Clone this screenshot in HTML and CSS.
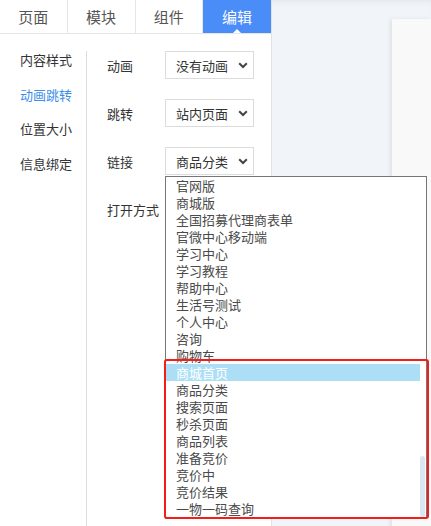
FILE: index.html
```html
<!DOCTYPE html>
<html lang="zh">
<head>
<meta charset="utf-8">
<link rel="stylesheet" href="styles.css">
</head>
<body>
<div class="app">
  <div class="editor">
    <div class="tabs">
      <div class="tab">页面</div>
      <div class="tab">模块</div>
      <div class="tab">组件</div>
      <div class="tab active">编辑</div>
    </div>
    <div class="body">
      <ul class="nav">
        <li>内容样式</li>
        <li class="on">动画跳转</li>
        <li>位置大小</li>
        <li>信息绑定</li>
      </ul>
      <div class="form">
        <div class="row">
          <span class="label">动画</span>
          <div class="select"><span>没有动画</span><svg class="chev" width="10" height="7" viewBox="0 0 10 7"><polyline points="1.2,1.2 5,5 8.8,1.2" fill="none" stroke="#444" stroke-width="2"/></svg></div>
        </div>
        <div class="row">
          <span class="label">跳转</span>
          <div class="select"><span>站内页面</span><svg class="chev" width="10" height="7" viewBox="0 0 10 7"><polyline points="1.2,1.2 5,5 8.8,1.2" fill="none" stroke="#444" stroke-width="2"/></svg></div>
        </div>
        <div class="row">
          <span class="label">链接</span>
          <div class="select"><span>商品分类</span><svg class="chev" width="10" height="7" viewBox="0 0 10 7"><polyline points="1.2,1.2 5,5 8.8,1.2" fill="none" stroke="#444" stroke-width="2"/></svg></div>
        </div>
        <div class="row">
          <span class="label">打开方式</span>
          <div class="select"></div>
        </div>
      </div>
    </div>
  </div>
  <div class="stage">
    <div class="card"></div>
  </div>
</div>

<div class="dropdown">
  <ul class="options">
    <li>官网版</li>
    <li>商城版</li>
    <li>全国招募代理商表单</li>
    <li>官微中心移动端</li>
    <li>学习中心</li>
    <li>学习教程</li>
    <li>帮助中心</li>
    <li>生活号测试</li>
    <li>个人中心</li>
    <li>咨询</li>
    <li>购物车</li>
    <li class="hl">商城首页</li>
    <li>商品分类</li>
    <li>搜索页面</li>
    <li>秒杀页面</li>
    <li>商品列表</li>
    <li>准备竞价</li>
    <li>竞价中</li>
    <li>竞价结果</li>
    <li>一物一码查询</li>
  </ul>
  <div class="thumb"></div>
</div>
<div class="redbox"></div>
</body>
</html>
```

FILE: styles.css
```css
html, body {
  margin: 0;
  padding: 0;
  width: 431px;
  height: 526px;
  overflow: hidden;
  background: #fff;
  font-family: "Noto Sans CJK SC", "Microsoft YaHei", sans-serif;
  color: #333;
}

.app {
  display: flex;
  height: 526px;
}

.editor {
  width: 271px;
  border-right: 1px solid #e2e2e2;
  background: #fff;
  flex-shrink: 0;
}

.tabs {
  display: flex;
  height: 33px;
  border-bottom: 1px solid #e6e6e6;
}

.tab {
  width: 67px;
  border-right: 1px solid #e6e6e6;
  display: flex;
  align-items: center;
  justify-content: center;
  font-size: 15px;
  color: #555;
  position: relative;
}

.tab.active {
  width: 68px;
  border-right: none;
  background: #4b8df8;
  color: #fff;
}

.tab.active::after {
  content: "";
  position: absolute;
  left: 50%;
  bottom: 0;
  margin-left: -4px;
  border-left: 4px solid transparent;
  border-right: 4px solid transparent;
  border-bottom: 4px solid #fff;
}

.body {
  display: flex;
  padding-top: 17px;
}

.nav {
  list-style: none;
  margin: 0;
  padding: 0 0 0 20px;
  width: 66px;
  height: 480px;
  border-right: 1px solid #dcdcdc;
}

.nav li {
  font-size: 13px;
  line-height: 18px;
  height: 34.7px;
  color: #333;
}

.nav li.on {
  color: #3d8ee9;
}

.form {
  padding-left: 20px;
}

.row {
  display: flex;
  align-items: center;
  height: 28px;
  margin-bottom: 20px;
}

.label {
  width: 58px;
  font-size: 13px;
  color: #333;
}

.select {
  border: 1px solid #dcdcdc;
  display: flex;
  align-items: center;
  justify-content: space-between;
  padding: 0 5px 0 10px;
  box-sizing: border-box;
  width: 89px;
  height: 28px;
  font-size: 13px;
  color: #333;
}

.chev {
  display: block;
}

.stage {
  flex: 1;
  background: #f1f5f9;
  box-shadow: inset 0 6px 6px -4px rgba(0,0,0,0.06);
  padding: 19px 0 0 120px;
}

.card {
  height: 520px;
  background: #f9f9f9;
  box-shadow: -2px 0 4px rgba(0,0,0,0.08);
}

.dropdown {
  position: absolute;
  left: 165px;
  top: 176px;
  width: 262px;
  height: 343px;
  box-sizing: border-box;
  border: 1px solid #767676;
  background: #fff;
  overflow: hidden;
}

.options {
  list-style: none;
  margin: 0;
  padding: 0 6px 0 0;
}

.options li {
  height: 17px;
  line-height: 17px;
  font-size: 13px;
  padding-left: 10px;
  color: #4a4a4a;
  white-space: nowrap;
}

.options li.hl {
  background: #acdff5;
  color: #fff;
}

.thumb {
  position: absolute;
  right: 1px;
  top: 279px;
  width: 5px;
  height: 61px;
  border-radius: 3px;
  background: #dae6f2;
}

.redbox {
  position: absolute;
  left: 164px;
  top: 359px;
  width: 265px;
  height: 160px;
  box-sizing: border-box;
  border: 2px solid #f31d1a;
  border-radius: 3px;
}
```
